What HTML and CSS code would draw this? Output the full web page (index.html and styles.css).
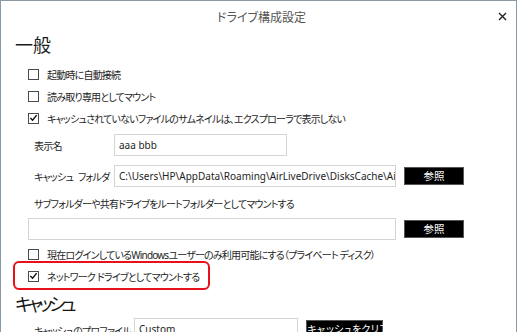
FILE: index.html
```html
<!DOCTYPE html>
<html lang="ja">
<head>
    <meta charset="UTF-8">
    <meta name="viewport" content="width=device-width, initial-scale=1.0">
    <title>ドライブ構成設定</title>
    <link rel="stylesheet" href="styles.css">
</head>
<body>

<div class="window">
    <div class="titlebar">
        <span class="title">ドライブ構成設定</span>
        <span class="close">
            <svg width="9" height="9" viewBox="0 0 9 9"><path d="M1 1 L8 8 M8 1 L1 8" stroke="#222" stroke-width="1.4" fill="none"/></svg>
        </span>
    </div>

    <div class="content">
        <h2 class="section">一般</h2>

        <label class="check first"><span class="box"></span>起動時に自動接続</label>
        <label class="check"><span class="box"></span>読み取り専用としてマウント</label>
        <label class="check"><span class="box checked"><svg width="10" height="10" viewBox="0 0 10 10"><path d="M1.5 5 L4 7.5 L8.5 1.8" stroke="#111" stroke-width="1.6" fill="none"/></svg></span>キャッシュされていないファイルのサムネイルは、エクスプローラで表示しない</label>

        <div class="field name-row">
            <span class="field-label">表示名</span>
            <div class="textbox short">aaa bbb</div>
        </div>

        <div class="field folder-row">
            <span class="field-label">キャッシュ フォルダ</span>
            <div class="textbox long">C:\Users\HP\AppData\Roaming\AirLiveDrive\DisksCache\Air</div>
            <button class="btn">参照</button>
        </div>

        <div class="sub-label">サブフォルダーや共有ドライブをルートフォルダーとしてマウントする</div>
        <div class="field root-row">
            <div class="textbox wide"></div>
            <button class="btn">参照</button>
        </div>

        <label class="check private"><span class="box"></span>現在ログインしているWindowsユーザーのみ利用可能にする（プライベート ディスク）</label>
        <label class="check marked"><span class="box checked"><svg width="10" height="10" viewBox="0 0 10 10"><path d="M1.5 5 L4 7.5 L8.5 1.8" stroke="#111" stroke-width="1.6" fill="none"/></svg></span>ネットワーク ドライブとしてマウントする<span class="highlight"></span></label>

        <h2 class="section cache">キャッシュ</h2>

        <div class="field profile-row">
            <span class="field-label wide-label">キャッシュのプロファイル</span>
            <div class="select">Custom<span class="arrow">⌄</span></div>
            <button class="btn clear">キャッシュをクリア</button>
        </div>
    </div>
</div>

</body>
</html>
```

FILE: styles.css
```css
body {
    margin: 0;
    padding: 0;
    background-color: #ffffff;
    font-family: "Noto Sans", "Noto Sans CJK JP", sans-serif;
    font-feature-settings: "palt";
    font-size: 10px;
    letter-spacing: -0.8px;
    color: #1e1e1e;
}

.window {
    width: 515px;
    height: 360px;
    border: 1px solid #8a99a8;
    background-color: #ffffff;
}

.titlebar {
    height: 32px;
    display: flex;
    align-items: center;
    justify-content: center;
    position: relative;
}

.title {
    font-size: 12px;
    letter-spacing: 0;
    color: #555555;
    padding-left: 6px;
}

.close {
    position: absolute;
    right: 9px;
    top: 11px;
    display: flex;
}

.content {
    padding-left: 14px;
}

.section {
    margin: 0;
    font-size: 18px;
    font-weight: normal;
    letter-spacing: 0;
    line-height: 24px;
    height: 24px;
    color: #1a1a1a;
}

.section.cache {
    margin-top: 5px;
    letter-spacing: -4px;
}

.check {
    display: flex;
    align-items: center;
    height: 22px;
    padding-left: 13px;
    white-space: nowrap;
}

.check.first {
    margin-top: 6px;
}

.box {
    width: 9px;
    height: 9px;
    border: 1px solid #4a4a4a;
    background-color: #fff;
    margin-right: 8px;
    display: flex;
    align-items: center;
    justify-content: center;
    flex-shrink: 0;
}

.box svg {
    display: block;
}

.field {
    display: flex;
    align-items: center;
}

.field-label {
    box-sizing: border-box;
    width: 99px;
    padding-left: 19px;
    white-space: nowrap;
    word-spacing: 3px;
}

.name-row {
    margin-top: 5px;
}

.folder-row {
    margin-top: 9px;
}

.textbox {
    height: 20px;
    line-height: 20px;
    border: 1px solid #d4d4d4;
    padding: 0 4px;
    box-sizing: content-box;
    white-space: nowrap;
    overflow: hidden;
    letter-spacing: 0;
}

.textbox.short {
    width: 163px;
}

.textbox.long {
    width: 272px;
}

.textbox.wide {
    width: 358px;
    margin-left: 13px;
}

.btn {
    margin-left: 8px;
    width: 60px;
    height: 18px;
    background-color: #000;
    color: #fff;
    border: 1px solid #555;
    font-family: "Noto Sans CJK JP", sans-serif;
    font-size: 10.5px;
    letter-spacing: 0;
    padding: 0;
    line-height: 16px;
}

.sub-label {
    margin-top: 8px;
    height: 18px;
    line-height: 18px;
    padding-left: 19px;
}

.root-row {
    margin-top: 5px;
}

.check.private {
    margin-top: 3px;
}

.check.marked {
    position: relative;
}

.highlight {
    position: absolute;
    left: -2px;
    top: -4px;
    width: 193px;
    height: 25px;
    border: 2px solid #e8101a;
    border-radius: 6px;
}

.profile-row {
    margin-top: 2px;
    align-items: flex-start;
}

.wide-label {
    width: 119px;
    padding-top: 5px;
}

.select {
    width: 154px;
    height: 20px;
    line-height: 20px;
    border: 1px solid #d4d4d4;
    padding: 0 4px;
    position: relative;
    letter-spacing: 0;
}

.arrow {
    position: absolute;
    right: 6px;
    top: 2px;
    color: #888;
    font-size: 9px;
}

.btn.clear {
    width: 77px;
    margin-top: 2px;
    font-size: 10px;
    letter-spacing: -1px;
    white-space: nowrap;
}
```
